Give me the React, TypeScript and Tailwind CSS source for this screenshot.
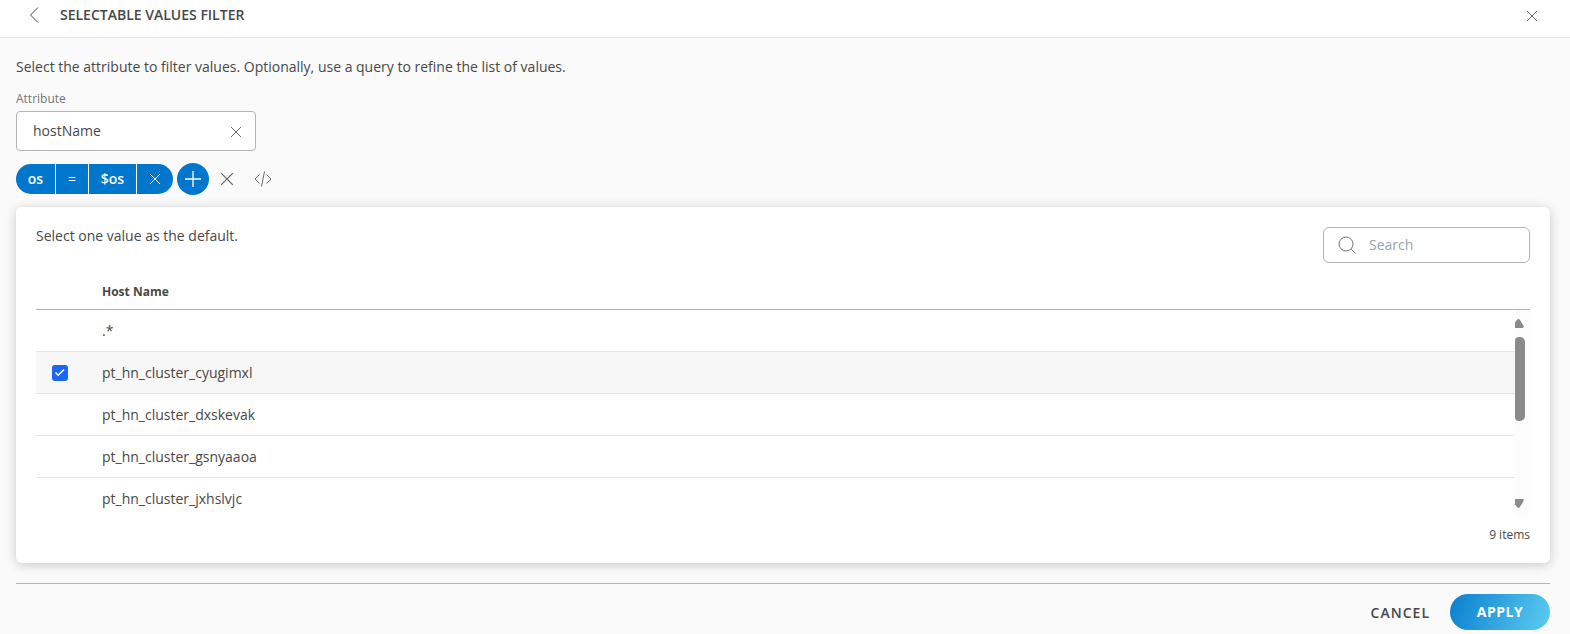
import { useState, type ReactNode } from 'react';
import clsx from 'clsx';

const HOSTS = [
  '.*',
  'pt_hn_cluster_cyugimxl',
  'pt_hn_cluster_dxskevak',
  'pt_hn_cluster_gsnyaaoa',
  'pt_hn_cluster_jxhslvjc',
];

const TOTAL_ITEMS = 9;

function Icon({ className, viewBox, children }: { className: string; viewBox: string; children: ReactNode }) {
  return (
    <svg className={className} viewBox={viewBox} fill="none" stroke="currentColor" aria-hidden="true">
      {children}
    </svg>
  );
}

function CloseIcon({ className }: { className: string }) {
  return (
    <Icon className={className} viewBox="0 0 12 12">
      <path d="M1 1l10 10M11 1L1 11" />
    </Icon>
  );
}

// os = $os pill with its remove button
function QueryChip() {
  const part = 'flex h-full items-center justify-center bg-[#0077cc] text-sm text-white';
  return (
    <div className="flex h-[30px] gap-px overflow-hidden rounded-full">
      <button className={clsx(part, 'w-[39px] font-semibold')}>os</button>
      <button className={clsx(part, 'w-8')}>=</button>
      <button className={clsx(part, 'w-[47px] font-semibold')}>$os</button>
      <button className={clsx(part, 'w-9')} aria-label="Remove condition">
        <CloseIcon className="size-3" />
      </button>
    </div>
  );
}

function HostTable() {
  const [selected, setSelected] = useState('pt_hn_cluster_cyugimxl');

  return (
    <div className="flex">
      <div className="h-[254px] flex-1 overflow-hidden">
        <table className="w-full table-fixed border-separate border-spacing-0 text-left">
          <thead>
            <tr className="h-[47px]">
              <th className="w-[66px] border-b border-[#b3b3b3] p-0" />
              <th className="border-b border-[#b3b3b3] p-0 pt-3 text-xs font-bold">Host Name</th>
            </tr>
          </thead>
          <tbody>
            {HOSTS.map((host) => {
              const checked = host === selected;
              return (
                <tr
                  key={host}
                  onClick={() => setSelected(host)}
                  className={clsx('h-[42px] cursor-pointer', checked && 'bg-[#f7f7f7]')}
                >
                  <td className="border-b border-[#e6e6e6] p-0 pl-4">
                    {checked && (
                      <span className="relative block size-4">
                        <input
                          type="checkbox"
                          checked
                          onChange={() => setSelected('')}
                          aria-label={host}
                          className="block size-4 appearance-none rounded-[3px] bg-[#1b66f5]"
                        />
                        <svg
                          className="pointer-events-none absolute inset-0 size-4"
                          viewBox="0 0 16 16"
                          fill="none"
                          stroke="white"
                          strokeWidth="1.5"
                          aria-hidden="true"
                        >
                          <path d="M3.5 7.5l2.700 2.700L12 4.500" />
                        </svg>
                      </span>
                    )}
                  </td>
                  <td className="border-b border-[#e6e6e6] p-0 text-sm">{host}</td>
                </tr>
              );
            })}
          </tbody>
        </table>
      </div>

      {/* Scrollbar */}
      <div className="flex w-[15px] flex-col" aria-hidden="true">
        <div className="h-[47px] border-b border-[#b3b3b3]" />
        <div className="flex flex-1 flex-col rounded-br-md bg-[#fcfcfc] pt-[9px] pb-[9px]">
          <svg className="h-[9px] w-[9px] text-[#8b8b8b]" viewBox="0 0 9 9" fill="currentColor">
            <path d="M0 3.500L2 1Q3.500-.8 5 1L8.600 7Q9.200 8.800 7.500 9H0z" />
          </svg>
          <div className="mt-[9px] h-[84px] w-2.5 rounded-[5px] rounded-l-sm bg-[#8b8b8b]" />
          <svg className="mt-auto h-[9px] w-[9px] text-[#8b8b8b]" viewBox="0 0 9 9" fill="currentColor">
            <path d="M0 5.500L2 8Q3.500 9.800 5 8L8.600 2Q9.200.2 7.500 0H0z" />
          </svg>
        </div>
      </div>
    </div>
  );
}

export default function App() {
  const [attribute, setAttribute] = useState('hostName');

  return (
    <div className="min-h-screen bg-[#fafafa] font-['Open_Sans',sans-serif] text-[#484848]">
      <header className="flex h-[38px] items-center border-b border-[#e6e6e6] bg-white pr-8 pb-2 pl-7">
        <button aria-label="Back" className="w-8">
          <Icon className="h-4 w-3" viewBox="0 0 12 16">
            <path d="M10 .5L2.500 8l7.500 7.500" />
          </Icon>
        </button>
        <h1 className="flex-1 text-sm font-semibold">SELECTABLE VALUES FILTER</h1>
        <button aria-label="Close" className="pt-0.5 text-[#666666]">
          <CloseIcon className="size-3" />
        </button>
      </header>

      <main className="pr-5 pl-4">
        <p className="pt-[19px] text-sm">
          Select the attribute to filter values. Optionally, use a query to refine the list of values.
        </p>

        <label htmlFor="attribute" className="mt-3.5 block text-xs text-[#777777]">
          Attribute
        </label>
        <div className="mt-1 flex h-10 w-60 items-center rounded border border-[#b3b3b3] bg-white pr-[13px] pl-4">
          <input
            id="attribute"
            value={attribute}
            onChange={(e) => setAttribute(e.target.value)}
            className="min-w-0 flex-1 text-sm outline-none"
          />
          <button aria-label="Clear attribute" className="pt-0.5 text-[#666666]" onClick={() => setAttribute('')}>
            <CloseIcon className="size-3" />
          </button>
        </div>

        <div className="mt-3 flex items-center">
          <QueryChip />
          <button
            aria-label="Add condition"
            className="ml-1 flex size-8 items-center justify-center rounded-full bg-[#0077cc] text-white"
          >
            <Icon className="size-4" viewBox="0 0 16 16">
              <path d="M8 0v16M0 8h16" strokeWidth="1.300" />
            </Icon>
          </button>
          <button aria-label="Clear query" className="ml-[11px] text-[#666666]">
            <CloseIcon className="size-3.5" />
          </button>
          <button aria-label="Edit as code" className="ml-5 text-[#666666]">
            <Icon className="h-4 w-[18px]" viewBox="0 0 18 16">
              <path d="M5.500 3.500L1 8l4.500 4.500M12.500 3.500L17 8l-4.500 4.500M10.500.5l-3 15" />
            </Icon>
          </button>
        </div>

        <section className="mt-3 rounded-md bg-white p-5 shadow-[0_2px_12px_rgba(0,0,0,0.2)]">
          <div className="flex items-start justify-between">
            <p className="text-sm leading-[18px]">Select one value as the default.</p>
            <label className="flex h-9 w-[207px] items-center rounded-md border border-[#b3b3b3] px-3.5">
              <Icon className="size-[18px] text-[#777777]" viewBox="0 0 18 18">
                <circle cx="8" cy="8" r="7" />
                <path d="M13 13l4.500 4.500" />
              </Icon>
              <input
                type="search"
                aria-label="Search"
                placeholder="Search"
                className="ml-[13px] min-w-0 flex-1 text-sm outline-none placeholder:text-[#9ca3af]"
              />
            </label>
          </div>

          <HostTable />

          <p className="mt-2.5 text-right text-xs">{TOTAL_ITEMS} items</p>
        </section>

        <footer className="mt-5 flex items-center justify-end gap-5 border-t border-[#b3b3b3] pt-2.5">
          <button className="pt-0.5 text-sm font-semibold tracking-[1px]">CANCEL</button>
          <button className="h-9 w-[100px] rounded-full bg-[linear-gradient(110deg,#0a7fd0,#5bcdf0)] text-sm font-bold tracking-[0.5px] text-white">
            APPLY
          </button>
        </footer>
      </main>
    </div>
  );
}
